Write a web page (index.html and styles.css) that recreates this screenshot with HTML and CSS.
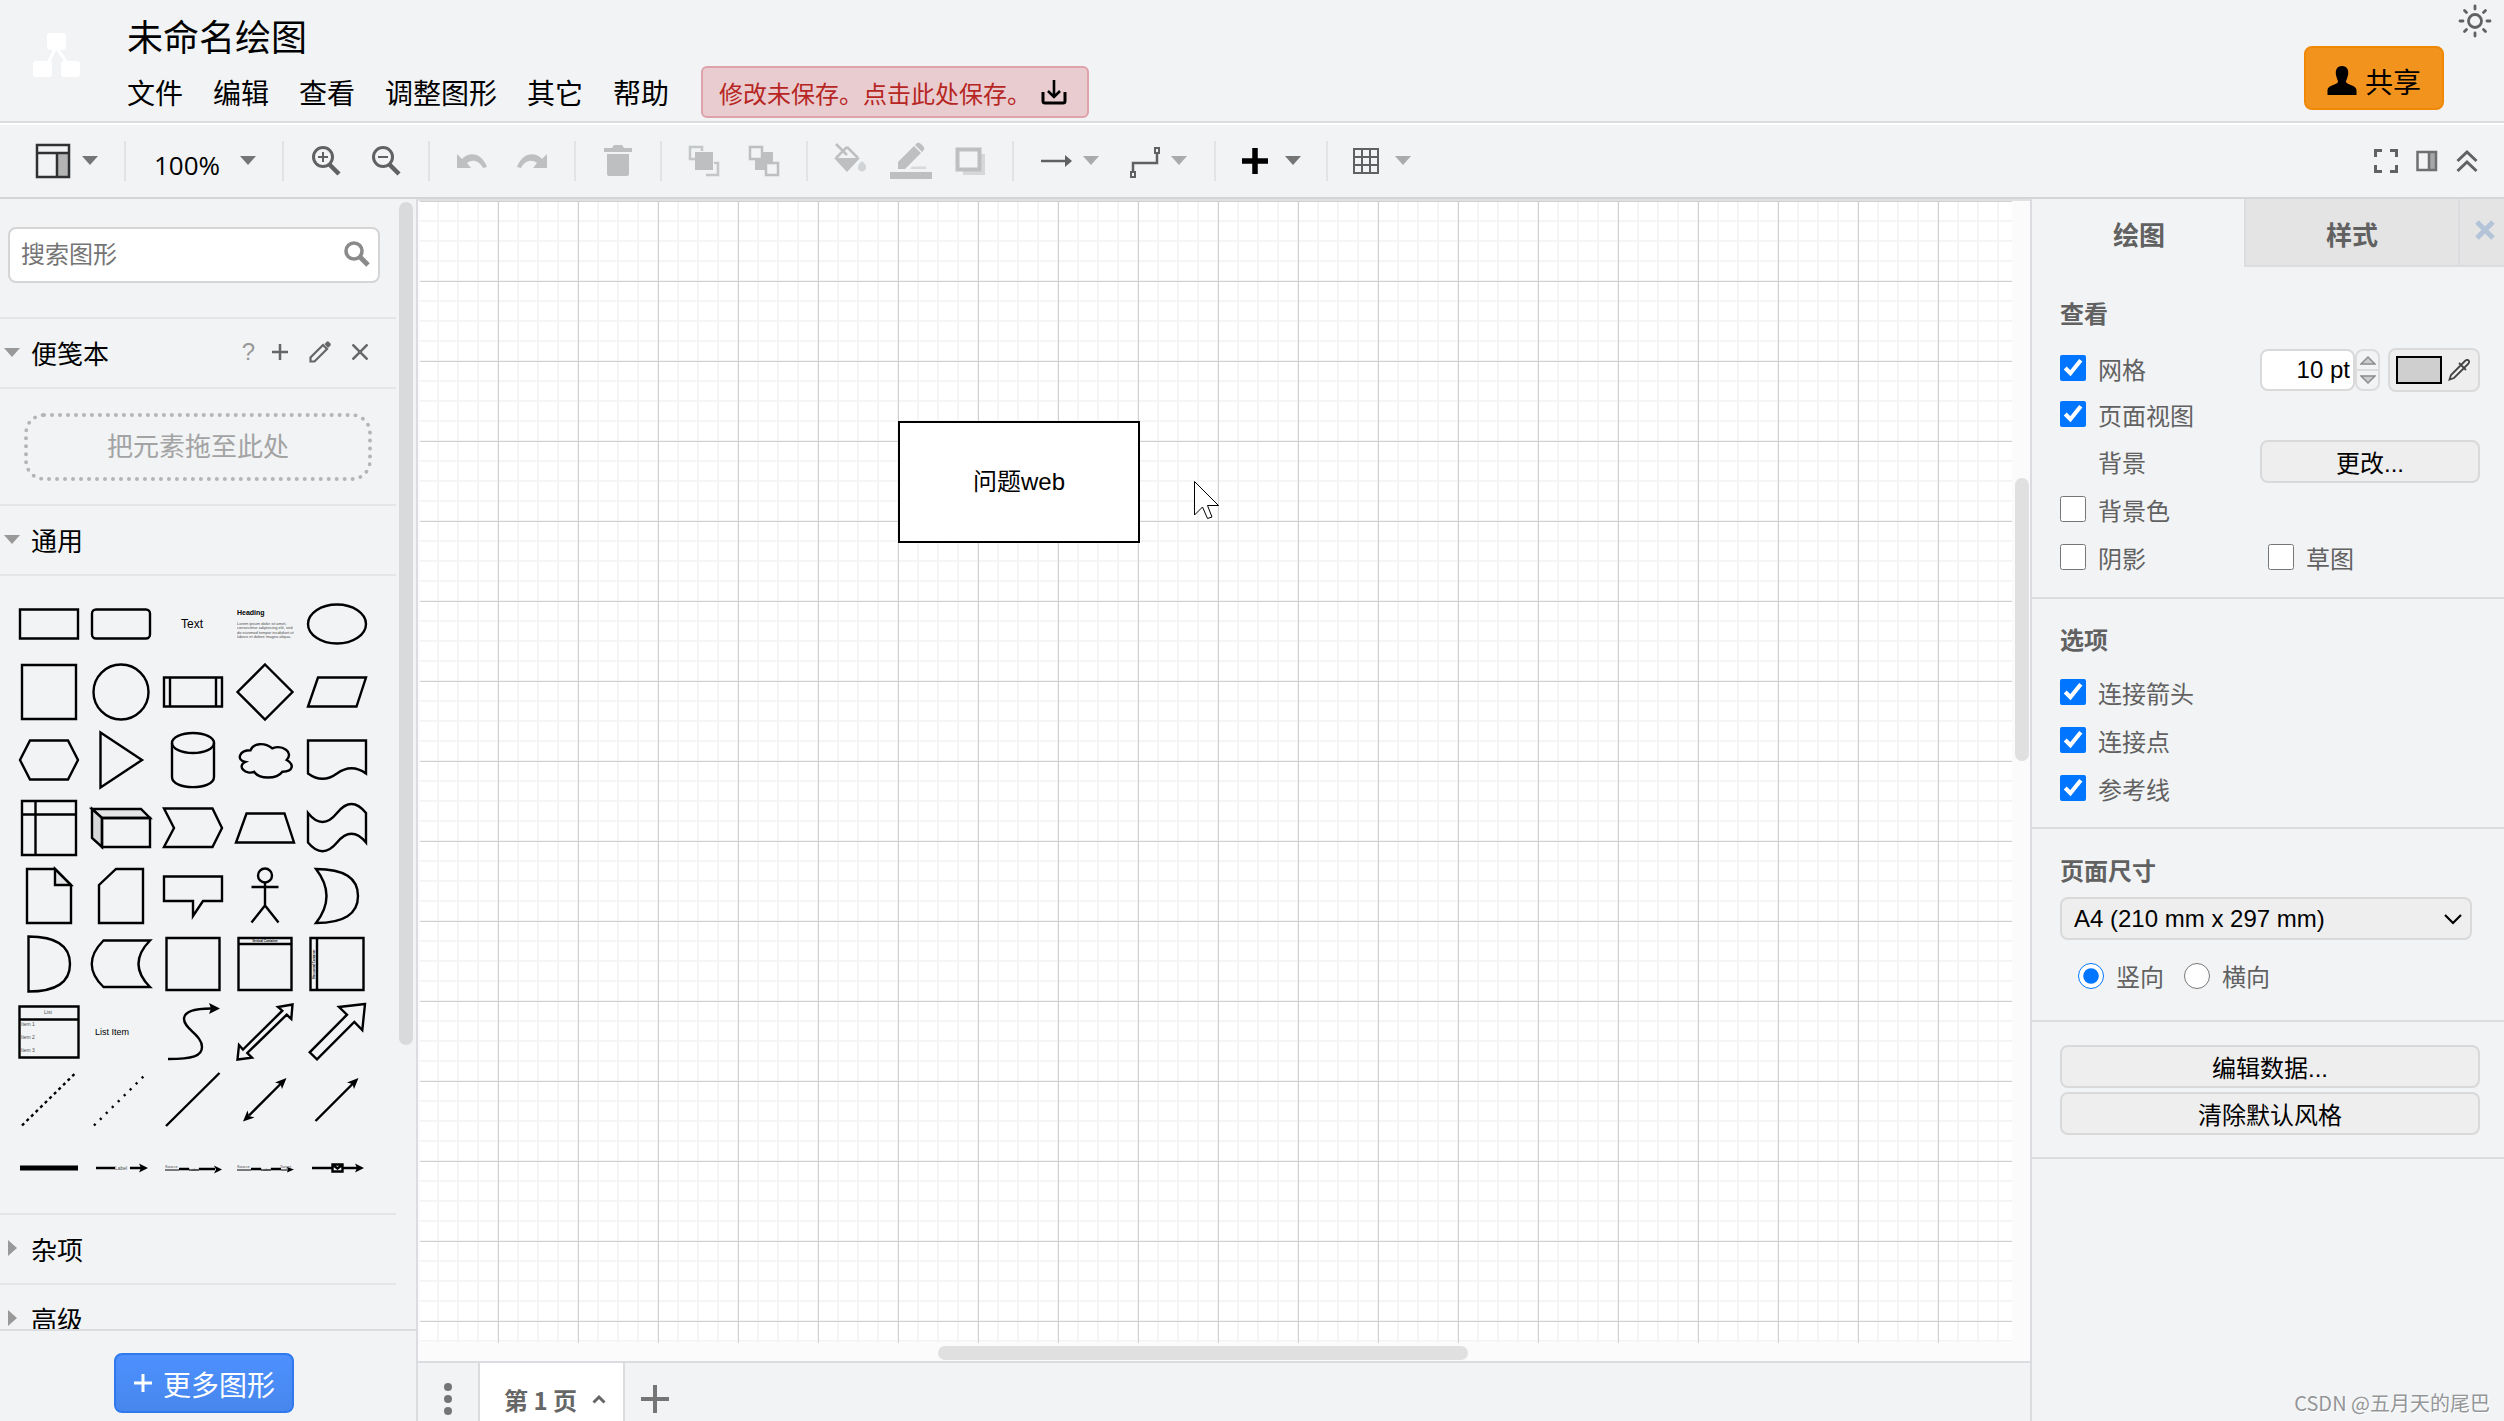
FILE: index.html
```html
<!DOCTYPE html>
<html lang="zh-CN">
<head>
<meta charset="utf-8">
<title>未命名绘图</title>
<link rel="stylesheet" href="styles.css">
</head>
<body>
<header class="header">
  <svg class="logo" viewBox="0 0 48 46" width="48" height="46"><path d="M23 14L13 34M23 14L37 34" stroke="#fff" stroke-width="3" fill="none"/><rect x="14" y="0" width="19" height="17" rx="3" fill="#fff"/><rect x="0" y="28" width="19" height="16" rx="3" fill="#fff"/><rect x="28" y="28" width="19" height="16" rx="3" fill="#fff"/></svg>
  <div class="titles">
    <h1 class="doc-title">未命名绘图</h1>
    <nav class="menu">
      <button class="menu-item">文件</button><button class="menu-item">编辑</button><button class="menu-item">查看</button><button class="menu-item">调整图形</button><button class="menu-item">其它</button><button class="menu-item">帮助</button>
      <button class="save-alert">修改未保存。点击此处保存。<svg width="26" height="26" viewBox="0 0 26 26" fill="none" stroke="#000" stroke-width="3"><path d="M13 1V17M7 12L13 18L19 12" stroke-width="2.6"/><path d="M2 13V22Q2 24 4 24H22Q24 24 24 22V13"/></svg></button>
    </nav>
  </div>
  <div class="header-right">
    <button class="icon-btn theme" aria-label="外观"><svg width="34" height="34" viewBox="-17 -17 34 34" fill="none" stroke="#5f6163" stroke-width="2.8" stroke-linecap="round"><circle r="6.5"/><path d="M0-15V-12M0 12V15M-15 0H-12M12 0H15M-10.500-10.500L-8.500-8.500M10.500 10.500L8.500 8.500M10.500-10.500L8.500-8.500M-10.500 10.500L-8.500 8.500"/></svg></button>
    <button class="share"><svg width="30" height="30" viewBox="0 0 30 30"><path d="M15 0C20 0 22 4 21 9C20.500 12 19 14 19 16C20 19 29 19 29.500 24V29H.5V24C1 19 10 19 11 16C11 14 9.500 12 9 9C8 4 10 0 15 0Z"/></svg>共享</button>
  </div>
</header>

<div class="toolbar" role="toolbar">
  <button class="tool tool-view" aria-label="视图"><svg width="36" height="36" viewBox="0 0 36 36"><rect x="22" y="10" width="11" height="24" fill="#b4b4b4"/><path d="M2 2H34V34H2ZM2 10H34M22 10V34" fill="none" stroke="#2f3133" stroke-width="2.500"/></svg><i class="caret"></i></button>
  <span class="sep"></span>
  <button class="tool tool-zoom">100%<i class="caret"></i></button>
  <span class="sep"></span>
  <span class="group wide">
    <button class="tool" aria-label="放大"><svg width="30" height="30" viewBox="0 0 30 30" fill="none" stroke="#5f6163"><circle cx="12" cy="11" r="9.500" stroke-width="3"/><path d="M18 18L28 28" stroke-width="4.500"/><path d="M7 11H17M12 6V16" stroke-width="2"/></svg></button>
    <button class="tool" aria-label="缩小"><svg width="30" height="30" viewBox="0 0 30 30" fill="none" stroke="#5f6163"><circle cx="12" cy="11" r="9.500" stroke-width="3"/><path d="M18 18L28 28" stroke-width="4.500"/><path d="M7 11H17" stroke-width="2"/></svg></button>
  </span>
  <span class="sep"></span>
  <span class="group">
    <button class="tool" aria-label="撤销" disabled><svg width="32" height="30" viewBox="0 0 32 30" fill="#bdbfc1"><path d="M1 8L6 13C12 6 25 5 31 21L27 22C23 14 16 13 11 17L15 22H1Z"/></svg></button>
    <button class="tool" aria-label="重做" disabled><svg width="32" height="30" viewBox="0 0 32 30" fill="#bdbfc1"><path d="M31 8L26 13C20 6 7 5 1 21L5 22C9 14 16 13 21 17L17 22H31Z"/></svg></button>
  </span>
  <span class="sep"></span>
  <span class="group wide"><button class="tool" aria-label="删除" disabled><svg width="30" height="32" viewBox="-1 0 30 32" fill="#bdbfc1"><path d="M0 3H8L10 0H18L20 3H28V7H0ZM3 9H25V29Q25 31 23 31H5Q3 31 3 29Z"/></svg></button></span>
  <span class="sep"></span>
  <span class="group">
    <button class="tool" aria-label="移至最前" disabled><svg width="32" height="32" viewBox="0 0 32 32"><path d="M7 14H2V2H14V6M18 30H30V18H26" fill="none" stroke="#c4c6c8" stroke-width="2.500"/><rect x="7" y="7" width="18" height="18" fill="#bdbfc1"/></svg></button>
    <button class="tool" aria-label="移至最后" disabled><svg width="32" height="32" viewBox="0 0 32 32"><rect x="7" y="7" width="18" height="18" fill="#bdbfc1"/><rect x="2" y="2" width="12" height="12" fill="#f1f3f5" stroke="#bdbfc1" stroke-width="2.500"/><rect x="18" y="18" width="12" height="12" fill="#f1f3f5" stroke="#bdbfc1" stroke-width="2.500"/></svg></button>
  </span>
  <span class="sep"></span>
  <span class="group tight">
    <button class="tool" aria-label="填充颜色" disabled><svg width="34" height="36" viewBox="0 0 34 36" fill="#bdbfc1"><path d="M3 1L14 12M14 4L25 15M14 4L3 15" fill="none" stroke="#bdbfc1" stroke-width="2.500"/><path d="M1 15H27L14 29Z"/><path d="M29 18Q34 22 33 26Q29 31 25 26Q24 22 29 18Z" opacity=".6"/></svg></button>
    <button class="tool" aria-label="线条颜色" disabled><svg width="42" height="38" viewBox="0 0 42 38" fill="#bdbfc1"><path d="M8 27V20L24 4L31 11L15 27ZM25 3L27 1Q29 0 31 2L34 5Q35 7 33 9L32 10Z"/><path d="M20 27L22 24.500H36V27Z" opacity=".5"/><rect x="0" y="30" width="42" height="7"/></svg></button>
    <button class="tool" aria-label="阴影" disabled><svg width="32" height="30" viewBox="0 0 32 30"><path d="M8 29V25H26V8H30V29Z" fill="#d5d7d9"/><rect x="2.500" y="3.500" width="22" height="20" fill="none" stroke="#bdbfc1" stroke-width="4"/></svg></button>
  </span>
  <span class="sep"></span>
  <span class="group wide">
    <button class="tool light near" aria-label="连接"><svg width="32" height="36" viewBox="0 0 32 36"><path d="M0 18H27" stroke="#5f6163" stroke-width="2.500"/><path d="M24 12L31 18L24 24Z" fill="#5f6163"/></svg><i class="caret"></i></button>
    <button class="tool light near" aria-label="航点"><svg width="32" height="36" viewBox="0 0 32 36" fill="none" stroke="#5f6163" stroke-width="2.500"><path d="M4 29V20H28V11"/><path d="M2 29H6V34H2ZM26 5H30V10H26Z" stroke-width="2"/></svg><i class="caret"></i></button>
  </span>
  <span class="sep"></span>
  <span class="group tight"><button class="tool" aria-label="插入"><svg width="30" height="36" viewBox="0 0 30 36"><path d="M1 18H27M14 5V31" stroke="#000" stroke-width="5.500"/></svg><i class="caret"></i></button></span>
  <span class="sep"></span>
  <span class="group tight"><button class="tool light" aria-label="表格"><svg width="28" height="36" viewBox="1 0 28 36"><path d="M2 6H26V30H2ZM2 14H26M2 22H26M10 6V30M18 6V30" fill="none" stroke="#5f6163" stroke-width="2"/></svg><i class="caret"></i></button></span>
  <span class="toolbar-end">
    <button class="tool" aria-label="全屏"><svg width="24" height="24" viewBox="0 0 24 24"><path d="M1.500 8V1.500H8M16 1.500H22.500V8M22.500 16V22.500H16M8 22.500H1.500V16" fill="none" stroke="#5f6163" stroke-width="3"/></svg></button>
    <button class="tool" aria-label="格式"><svg width="22" height="24" viewBox="0 0 22 24"><path d="M13 3H20V21H13Z" fill="#a5a7a9"/><path d="M1.500 3H20V21H1.500ZM13 3V21" fill="none" stroke="#6d6f71" stroke-width="2.500"/></svg></button>
    <button class="tool" aria-label="收起"><svg width="22" height="24" viewBox="0 0 22 24"><path d="M1.500 12L11 3L20.500 12M1.500 22L11 13L20.500 22" fill="none" stroke="#5f6163" stroke-width="3"/></svg></button>
  </span>
</div>

<main class="main">
  <aside class="sidebar">
    <div class="palettes">
      <div class="palette-list">
        <div class="search"><input class="search-input" type="text" placeholder="搜索图形" aria-label="搜索图形"><svg width="26" height="26" viewBox="0 0 26 26" fill="none" stroke="#8a8a8a"><circle cx="10" cy="10" r="8" stroke-width="3.500"/><path d="M16 16L24 24" stroke-width="5"/></svg></div>
        <div class="section-head">
          <i class="tri"></i><span class="section-name">便笺本</span>
          <span class="head-tools"><button class="icon-btn help">?</button>
          <button class="icon-btn" aria-label="添加"><svg width="16" height="16" viewBox="0 0 16 16"><path d="M0 8H16M8 0V16" stroke="#666" stroke-width="2.500"/></svg></button>
          <button class="icon-btn" aria-label="编辑"><svg width="22" height="22" viewBox="0 0 22 22"><path d="M1.500 20.500V16.500L14 4L18 8L5.500 20.500Z" fill="none" stroke="#666" stroke-width="2.200"/><path d="M15.500 3L18 .5Q19 0 20 1L21.500 2.500Q22 3.500 21.500 4.500L19 7Z" fill="#666"/></svg></button>
          <button class="icon-btn" aria-label="关闭"><svg width="16" height="16" viewBox="0 0 16 16"><path d="M.5.5L15.500 15.500M15.500.5L.5 15.500" stroke="#666" stroke-width="2.500"/></svg></button></span>
        </div>
        <div class="drop-wrap"><div class="drop">把元素拖至此处</div></div>
        <div class="section-head"><i class="tri"></i><span class="section-name">通用</span></div>
        <div class="shapes">
          <svg viewBox="-36 -34 72 68"><path d="M-29-14.500H29V14.500H-29Z"/></svg>
          <svg viewBox="-36 -34 72 68"><rect x="-29" y="-14.500" width="58" height="29" rx="4"/></svg>
          <svg viewBox="-36 -34 72 68"><text class="t12" x="-12" y="4">Text</text></svg>
          <svg viewBox="-36 -34 72 68"><text class="t7" x="-28" y="-9">Heading</text><text class="t4" x="-28" y="1">Lorem ipsum dolor sit amet,</text><text class="t4" x="-28" y="5">consectetur adipisicing elit, sed</text><text class="t4" x="-28" y="10">do eiusmod tempor incididunt ut</text><text class="t4" x="-28" y="14">labore et dolore magna aliqua.</text></svg>
          <svg viewBox="-36 -34 72 68"><ellipse rx="29" ry="19.500"/></svg>

          <svg viewBox="-36 -34 72 68"><path d="M-27-27H27V27H-27Z"/></svg>
          <svg viewBox="-36 -34 72 68"><circle r="27.500"/></svg>
          <svg viewBox="-36 -34 72 68"><path d="M-29-14.500H29V14.500H-29ZM-23-14.500V14.500M23-14.500V14.500"/></svg>
          <svg viewBox="-36 -34 72 68"><path d="M0-27.500L27.500 0L0 27.500L-27.500 0Z"/></svg>
          <svg viewBox="-36 -34 72 68"><path d="M-19-14.500H29L19.500 14.500H-29Z"/></svg>

          <svg viewBox="-36 -34 72 68"><path d="M-19-19.500H19L29 0L19 19.500H-19L-29 0Z"/></svg>
          <svg viewBox="-36 -34 72 68"><path d="M-20.500-27.500L21 0L-20.500 27.500Z"/></svg>
          <svg viewBox="-36 -34 72 68"><ellipse cy="-17" rx="21" ry="10"/><path d="M-21-17V17C-21 30.500 21 30.500 21 17V-17"/></svg>
          <svg viewBox="-36 -34 72 68"><path d="M-14.500-9.700C-26-9.700-29 0-19.700 2C-29 6.200-18.600 15.600-11 11.700C-5.800 19.500 11.600 19.500 17.400 11.700C29 11.700 29 3.900 21.700 0C29-7.800 17.400-15.600 7.200-11.700C0-17.500-11.600-17.500-14.500-9.700Z"/></svg>
          <svg viewBox="-36 -34 72 68"><path d="M-29-19.500H29V13.500Q14.500 3 0 13.500T-29 13.500Z"/></svg>

          <svg viewBox="-36 -34 72 68"><path d="M-27-27H27V27H-27ZM-27-13.500H27M-13.500-27V27"/></svg>
          <svg viewBox="-36 -34 72 68"><path d="M-29-19H20L29-10H-19Z" fill="#e3e5e6"/><path d="M-29-19L-19-10V19L-29 10Z" fill="#d5d7d8"/><path d="M-19-10H29V19H-19Z"/></svg>
          <svg viewBox="-36 -34 72 68"><path d="M-29-19.500H19.500L29 0L19.500 19H-29L-19 0Z"/></svg>
          <svg viewBox="-36 -34 72 68"><path d="M-18.500-14.500H19.500L29 14.500H-29Z"/></svg>
          <svg viewBox="-36 -34 72 68"><path d="M-29-15Q-14.500 3 0-15T29-15V14.500Q14.500-3 0 14.500T-29 14.500Z"/></svg>

          <svg viewBox="-36 -34 72 68"><path d="M6-27V-11H22Z" fill="#e3e5e6"/><path d="M-22-27H6L22-11V27H-22Z"/></svg>
          <svg viewBox="-36 -34 72 68"><path d="M-22-11L-5-27H22V27H-22Z"/></svg>
          <svg viewBox="-36 -34 72 68"><path d="M-29-19.500H29V5H10L0 20V5H-29Z"/></svg>
          <svg viewBox="-36 -34 72 68"><circle cy="-20.500" r="7"/><path d="M0-13.500V9.500M-13.500-9H13.500M-13.500 26.500L0 9.500L13.500 26.500"/></svg>
          <svg viewBox="-36 -34 72 68"><path d="M-21-27Q21-27 21 0Q21 27-21 27Q0 0-21-27Z"/></svg>

          <svg viewBox="-36 -34 72 68"><path d="M-20.500-27.500Q21-27.500 21 0Q21 27.500-20.500 27.500Z"/></svg>
          <svg viewBox="-36 -34 72 68"><path d="M-17.500-23.500H29Q6 0 29 23H-17.500Q-41 0-17.500-23.500Z"/></svg>
          <svg viewBox="-36 -34 72 68"><path d="M-26.500-26H26.500V26H-26.500Z"/></svg>
          <svg viewBox="-36 -34 72 68"><text class="t3b" x="0" y="-22">Vertical Container</text><path d="M-26.500-26H26.500V26H-26.500ZM-26.500-20H26.500"/></svg>
          <svg viewBox="-36 -34 72 68"><text class="t3b" x="0" y="-22" transform="rotate(-90)">Horizontal Container</text><path d="M-26.500-26H26.500V26H-26.500ZM-20-26V26"/></svg>

          <svg viewBox="-36 -34 72 68"><path d="M-29.500-25.500H29.500V25.500H-29.500ZM-29.500-12.500H29.500"/><text class="t5" x="-5" y="-18">List</text><text class="t5" x="-28" y="-6">Item 1</text><text class="t5" x="-28" y="7">Item 2</text><text class="t5" x="-28" y="20">Item 3</text></svg>
          <svg viewBox="-36 -34 72 68"><text class="t9" x="-26" y="3">List Item</text></svg>
          <svg viewBox="-36 -34 72 68"><path d="M-25 27C0 27 9 24 9 15C9 3-9-3-9-13C-9-20 0-23.500 18-23.500"/><path class="head" d="M27-23.500L16-29L18-23.500L16-18Z"/></svg>
          <svg viewBox="-36 -34 72 68"><path d="M27.500-27.500L13-25L17.300-21.300L-22 17.500L-26 13L-27.500 27.500L-13 25.700L-17.700 21L21.700-17.300L26.300-13Z"/></svg>
          <svg viewBox="-36 -34 72 68"><path d="M28-28L2-25L10-17.300L-27.300 20.300L-20 27.300L17.300-10L25.300-2Z"/></svg>

          <svg viewBox="-36 -34 72 68"><path d="M-27 25.500L25.500-26" stroke-dasharray="3 3.400"/></svg>
          <svg viewBox="-36 -34 72 68"><path d="M-27 25.500L22.500-23.500" stroke-dasharray="2.200 6.200"/></svg>
          <svg viewBox="-36 -34 72 68"><path d="M-27 26L26.500-27"/></svg>
          <svg viewBox="-36 -34 72 68"><path d="M-16 15.500L16-16.500"/><path class="head" d="M21.500-22L17-11L15.500-16L10-17.500ZM-22 21.500L-17.500 10.500L-16 16L-10.500 17.500Z"/></svg>
          <svg viewBox="-36 -34 72 68"><path d="M-21.500 21L16-16.500"/><path class="head" d="M21.500-22L17-11L15.500-16L10-17.500Z"/></svg>

          <svg viewBox="-36 -34 72 68"><path class="bar" d="M-29 0H29"/></svg>
          <svg viewBox="-36 -34 72 68"><path d="M-25 0H-6M9 0H20"/><path class="head" d="M27 0L18-4.500L20 0L18 4.500Z"/><text class="t5" x="-6" y="2">Label</text></svg>
          <svg viewBox="-36 -34 72 68"><path d="M-14 1H-4M6 1H22"/><path class="thin" d="M-28 2H-14M-4 2H6"/><path class="head" d="M29 1.500L21-2.500L23 1.500L21 5.500Z"/><text class="t4" x="-28" y="0">Source</text><text class="t4" x="-4" y="3">Label</text></svg>
          <svg viewBox="-36 -34 72 68"><path d="M-14 1H-4M6 1H16"/><path class="thin" d="M-28 2H-14M-4 2H6M16 2H24"/><path class="head" d="M29 1.500L22-1L23 1.500L22 4.500Z"/><text class="t4" x="-28" y="0">Source</text><text class="t4" x="-4" y="3">Label</text><text class="t4" x="15" y="0">Target</text></svg>
          <svg viewBox="-36 -34 72 68"><path d="M-25 0H-5M6 0H20M-4.500-3.500H5.500V3.500H-4.500ZM-4-3L.5.500L5-3"/><path class="head" d="M27 0L18-4.500L20 0L18 4.500Z"/></svg>
        </div>
        <div class="section-head"><i class="tri closed"></i><span class="section-name">杂项</span></div>
        <div class="section-head"><i class="tri closed"></i><span class="section-name">高级</span></div>
      </div>
      <div class="side-track"><div class="side-thumb"></div></div>
    </div>
    <div class="more"><button class="more-btn"><svg width="20" height="20" viewBox="0 0 20 20"><path d="M1 9H19M10 0V18" stroke="#fff" stroke-width="3"/></svg>更多图形</button></div>
  </aside>

  <section class="center">
    <div class="canvas">
      <div class="page">
        <div class="node">问题web</div>
        <svg class="cursor" width="26" height="40" viewBox="0 0 26 40"><path d="M.5.500L24.500 24.500H13.500L18 36L13.500 37.500L8.500 26L.5 34Z" fill="#fff" stroke="#000"/></svg>
      </div>
      <div class="v-track"><div class="v-thumb"></div></div>
      <div class="h-track"><div class="h-thumb"></div></div>
    </div>
    <div class="tabs">
      <button class="tab-menu" aria-label="页面"><svg width="8" height="32" viewBox="0 0 8 32" fill="#757575"><circle cx="4" cy="4" r="4"/><circle cx="4" cy="16" r="4"/><circle cx="4" cy="28" r="4"/></svg></button>
      <button class="page-tab">第 1 页<svg width="14" height="10" viewBox="0 0 14 10"><path d="M1.500 8.500L7 3L12.500 8.500" fill="none" stroke="#666" stroke-width="3"/></svg></button>
      <button class="tab-add" aria-label="插入页面"><svg width="28" height="28" viewBox="0 0 28 28"><path d="M0 14H28M14 0V28" stroke="#757575" stroke-width="4"/></svg></button>
    </div>
  </section>

  <aside class="format">
    <div class="format-tabs"><button class="ftab active">绘图</button><button class="ftab">样式</button><button class="fclose" aria-label="关闭"><svg width="20" height="20" viewBox="0 0 20 20"><path d="M2 2L18 18M18 2L2 18" stroke="#b3c3d8" stroke-width="5"/></svg></button></div>
    <section class="block view">
      <h2 class="block-title">查看</h2>
      <div class="row first"><label class="check"><input type="checkbox" checked>网格</label>
        <span class="grid-size"><input class="num" type="text" value="10 pt" aria-label="网格大小"><span class="spin"><button class="spin-btn" aria-label="增加"><svg width="16" height="10" viewBox="0 0 16 10"><path d="M1 9L8 2L15 9Z" fill="#ccc" stroke="#8c8c8c" stroke-width="1.500"/></svg></button><button class="spin-btn" aria-label="减少"><svg width="16" height="10" viewBox="0 0 16 10"><path d="M1 1L8 8L15 1Z" fill="#ccc" stroke="#8c8c8c" stroke-width="1.500"/></svg></button></span>
        <button class="color" aria-label="网格颜色"><span class="swatch"></span><svg width="22" height="22" viewBox="0 0 22 22" fill="none" stroke="#444" stroke-width="1.800"><path d="M13 6L3 16L1.500 20.500L6 19L16 9M11 4L18 11M13 6L17 2Q19 0 20.500 1.500Q22 3 20 5L16 9"/></svg></button></span></div>
      <div class="row page-view"><label class="check"><input type="checkbox" checked>页面视图</label></div>
      <div class="row"><span class="plain">背景</span><button class="btn change">更改...</button></div>
      <div class="row"><label class="check"><input type="checkbox">背景色</label></div>
      <div class="row"><label class="check half"><input type="checkbox">阴影</label><label class="check"><input type="checkbox">草图</label></div>
    </section>
    <section class="block options">
      <h2 class="block-title">选项</h2>
      <div class="row"><label class="check"><input type="checkbox" checked>连接箭头</label></div>
      <div class="row"><label class="check"><input type="checkbox" checked>连接点</label></div>
      <div class="row"><label class="check"><input type="checkbox" checked>参考线</label></div>
    </section>
    <section class="block paper">
      <h2 class="block-title"><label for="paper-size">页面尺寸</label></h2>
      <div class="select-wrap"><select class="select" id="paper-size"><option>A4 (210 mm x 297 mm)</option></select><svg width="18" height="12" viewBox="0 0 18 12"><path d="M1 2L9 10L17 2" fill="none" stroke="#000" stroke-width="2.200"/></svg></div>
      <div class="radios"><label class="check"><input type="radio" name="orientation" checked>竖向</label><label class="check"><input type="radio" name="orientation">横向</label></div>
    </section>
    <section class="block actions"><button class="btn">编辑数据...</button><button class="btn">清除默认风格</button></section>
    <div class="credit">CSDN @五月天的尾巴</div>
  </aside>
</main>
</body>
</html>
```
FILE: styles.css
```css
* { box-sizing: border-box; }
body {
  margin: 0;
  height: 100vh;
  display: flex;
  flex-direction: column;
  overflow: hidden;
  background: #f1f3f5;
  color: #000;
  font-family: "Liberation Sans", "Noto Sans CJK SC", sans-serif;
  font-size: 24px;
}
button, input, select { font: inherit; color: inherit; }
button { background: none; border: 0; padding: 0; display: flex; align-items: center; white-space: nowrap; }
h1, h2 { margin: 0; font-weight: 400; }
svg { display: block; flex: none; }

/* header */
.header { display: flex; height: 123px; flex: none; border-bottom: 2px solid #dadce0; }
.logo { margin: 33px 46px 0 33px; }
.titles { flex: 1; padding-top: 15px; }
.doc-title { font-size: 36px; line-height: 48px; }
.menu { display: flex; align-items: center; gap: 30px; margin-top: 3px; height: 52px; font-size: 28px; }
.save-alert {
  height: 52px;
  margin-left: 2px;
  padding: 0 20px 0 16px;
  gap: 10px;
  border: 2px solid #dea2ab;
  border-radius: 6px;
  background: #e9cccf;
  color: #b62623;
  font-size: 24px;
}
.header-right { display: flex; align-items: flex-start; flex-direction: row-reverse; padding-right: 12px; }
.theme { margin-top: 4px; }
.share {
  width: 140px;
  height: 64px;
  margin: 46px 14px 0 0;
  padding: 6px 0 0 21px;
  gap: 8px;
  border: 2px solid #f08705;
  border-radius: 8px;
  background: #f2931e;
  font-size: 28px;
}

/* toolbar */
.toolbar { display: flex; align-items: center; flex: none; height: 76px; padding-bottom: 1px; border-top: 2px solid #fff; border-bottom: 2px solid #d3d5d6; }
.sep { width: 2px; height: 40px; background: #e1e3e5; }
.group { display: flex; align-items: center; padding: 0 26px; gap: 28px; }
.group.wide { padding: 0 27px; gap: 30px; }
.group.tight { padding: 0 25px; gap: 23px; }
.caret { flex: none; border: 8px solid transparent; border-top: 9px solid #757575; border-bottom: 0; margin-left: 14px; }
.near .caret { margin-left: 10px; }
.light .caret { border-top-color: #a8aaac; }
.tool-view { padding: 0 26px 0 35px; }
.tool-view .caret { margin-left: 11px; }
.tool-zoom { padding: 8px 26px 0 28px; font: 26px "Open Sans", sans-serif; }
.tool-zoom .caret { margin: 0 0 8px 20px; }
.toolbar-end { display: flex; gap: 18px; margin-left: auto; padding-right: 26px; }

/* sidebar */
.main { display: flex; flex: 1; min-height: 0; }
.sidebar { display: flex; flex-direction: column; width: 418px; flex: none; border-right: 2px solid #dadce0; }
.palettes { display: flex; flex: 1; min-height: 0; overflow: hidden; }
.palette-list { width: 396px; flex: none; }
.side-track { width: 20px; padding: 3px 3px 0; }
.side-thumb { width: 14px; height: 843px; border-radius: 7px; background: #d9dadc; }
.search { display: flex; align-items: center; height: 56px; margin: 28px 16px 34px 8px; padding: 0 8px 2px 11px; border: 2px solid #d5d5d5; border-radius: 8px; background: #fff; }
.search-input { flex: 1; min-width: 0; border: 0; padding: 2px 0 0; background: none; outline: 0; }
.search-input::placeholder { color: #757575; opacity: 1; }
.section-head { display: flex; align-items: center; height: 70px; padding: 0 0 2px 4px; border-top: 2px solid #e3e5e6; font-size: 26px; }
.section-name { margin-left: 11px; }
.tri { border: 8px solid transparent; border-top: 9px solid #999; border-bottom: 0; }
.tri.closed { border: 8px solid transparent; border-left: 9px solid #999; border-right: 0; margin: 0 3px 0 4px; }
.head-tools { display: flex; align-items: center; gap: 21px; margin-left: auto; padding-right: 28px; }
.help { color: #999; margin-right: -4px; font-size: 24px; }
.drop-wrap { border-top: 2px solid #e3e5e6; padding: 24px; height: 117px; }
.drop { height: 68px; border: 4px dotted #b3b5b6; border-radius: 20px; color: #a3a3a3; font-size: 26px; line-height: 60px; text-align: center; }
.shapes { display: grid; grid-template-columns: repeat(5, 72px); grid-auto-rows: 68px; padding: 14px 0 11px 13px; border-top: 2px solid #e3e5e6; }
.shapes svg { width: 72px; height: 68px; fill: none; stroke: #000; stroke-width: 2.4; }
.shapes .bar { stroke-width: 5; }
.shapes .thin { stroke-width: 1; }
.shapes .head { fill: #000; stroke: none; }
.shapes text { fill: #000; stroke: none; }
.t12 { font-size: 12px; }
.t9 { font-size: 9px; }
.t7 { font-size: 7px; font-weight: 700; }
.t5 { font-size: 5px; opacity: .7; }
.t4 { font-size: 4px; opacity: .7; }
.t3b { font-size: 3px; font-weight: 700; text-anchor: middle; }
.more { display: flex; justify-content: center; height: 92px; flex: none; border-top: 2px solid #dadce0; padding: 22px 8px 0 0; }
.more-btn { width: 180px; height: 60px; padding-top: 2px; justify-content: center; gap: 10px; border: 2px solid #3079ed; border-radius: 8px; background: linear-gradient(#4d90fe, #4787ed); color: #fff; font-size: 28px; }

/* drawing area */
.center { display: flex; flex-direction: column; flex: 1; min-width: 0; }
.canvas { display: grid; grid-template: 1fr 18px / 1fr 18px; flex: 1; padding-left: 2px; border-top: 2px solid #e0e1e2; background: #fbfbfb; }
.page {
  position: relative;
  background-color: #fff;
  background-image:
    linear-gradient(90deg, #d0d0d0 1px, transparent 1px),
    linear-gradient(#d0d0d0 1px, transparent 1px),
    linear-gradient(90deg, #f5f5f5 2px, transparent 2px),
    linear-gradient(#f5f5f5 2px, transparent 2px);
  background-size: 80px 80px, 80px 80px, 20px 20px, 20px 20px;
  background-position: 78px 0, 0 80px, 17px 0, 0 19px;
}
.node { position: absolute; left: 478px; top: 220px; width: 242px; height: 122px; border: 2px solid #000; background: #fff; line-height: 118px; text-align: center; }
.cursor { position: absolute; left: 774px; top: 280px; }
.v-track { padding: 277px 0 0 3px; }
.v-thumb { width: 14px; height: 283px; border-radius: 7px; background: #e0e0e0; }
.h-track { padding: 3px 0 0 518px; }
.h-thumb { width: 530px; height: 14px; border-radius: 7px; background: #e0e0e0; }
.tabs { display: flex; height: 60px; flex: none; border-top: 2px solid #dadce0; color: #666; }
.tab-menu { width: 60px; justify-content: center; padding-top: 14px; }
.page-tab { width: 147px; gap: 15px; padding: 14px 0 0 24px; border: 2px solid #dadce0; border-width: 0 2px; background: #fff; font-family: "Noto Sans CJK SC", sans-serif; font-weight: 700; }
.tab-add { padding: 14px 0 0 16px; }

/* format panel */
.format { display: flex; flex-direction: column; width: 474px; flex: none; border-left: 2px solid #dadce0; color: #616161; }
.format-tabs { display: flex; height: 68px; flex: none; font-size: 26px; font-weight: 700; }
.ftab, .fclose { justify-content: center; border: 2px solid #dadce0; border-width: 0 0 2px 2px; background: #e4e4e4; }
.ftab { width: 214px; padding-top: 3px; }
.ftab.active { width: 212px; border-color: transparent; background: none; }
.fclose { flex: 1; padding: 0 0 4px 6px; }
.block { padding-left: 28px; border-bottom: 2px solid #dadce0; }
.block-title { font-size: 24px; font-weight: 700; line-height: 36px; }
.view { height: 332px; padding-top: 30px; }
.row { display: flex; align-items: center; height: 48px; padding-right: 24px; }
.row.first { margin-top: 12px; height: 46px; }
.row.page-view { height: 46px; }
.check { display: flex; align-items: center; gap: 12px; }
.check input { width: 26px; height: 26px; margin: 0; accent-color: #0075ff; }
.half { width: 208px; }
.grid-size { display: flex; align-items: center; margin-left: auto; padding-top: 3px; color: #000; }
.num { width: 95px; height: 42px; padding: 0 3px 0 0; border: 2px solid #d9d9d9; border-radius: 8px; background: #fff; text-align: right; }
.spin { display: flex; flex-direction: column; width: 25px; height: 42px; border: 2px solid #dcdcdc; border-radius: 8px; }
.spin-btn { flex: 1; justify-content: center; }
.spin-btn + .spin-btn { border-top: 2px solid #dcdcdc; }
.color { width: 92px; height: 44px; margin-left: 8px; padding-left: 6px; gap: 6px; border: 2px solid #dadada; border-radius: 8px; background: #eee; }
.swatch { width: 46px; height: 28px; border: 2px solid #000; background: #cfcfcf; }
.plain { padding-left: 38px; }
.btn { height: 43px; justify-content: center; border: 2px solid #d9d9d9; border-radius: 8px; background: #eee; color: #000; }
.change { width: 220px; margin-left: auto; }
.options { height: 230px; padding-top: 24px; }
.options .block-title { margin-bottom: 9px; }
.paper { height: 193px; padding-top: 25px; }
.select-wrap { display: grid; align-items: center; width: 412px; margin-top: 7px; }
.select-wrap > * { grid-area: 1 / 1; }
.select-wrap svg { justify-self: end; margin-right: 10px; pointer-events: none; }
.select { appearance: none; width: 100%; height: 43px; padding: 0 12px; border: 2px solid #d9d9d9; border-radius: 8px; background: #eee; color: #000; }
.radios { display: flex; gap: 20px; margin: 18px 0 0 18px; }
.actions { display: flex; flex-direction: column; gap: 4px; height: 137px; padding: 23px 24px 0 28px; }
.credit { margin: auto 14px 0 auto; padding-bottom: 4px; color: #949698; font: 20px "Noto Sans CJK SC", sans-serif; text-shadow: 1px 1px 0 #fff; }
```
